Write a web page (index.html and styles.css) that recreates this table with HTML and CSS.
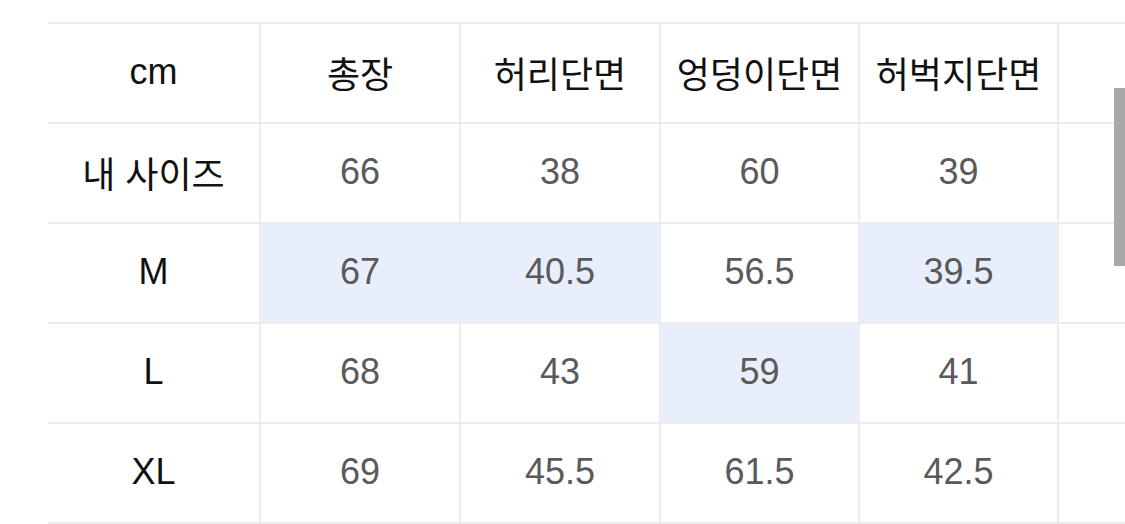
FILE: index.html
```html
<!DOCTYPE html>
<html lang="ko">
<head>
<meta charset="utf-8">
<link rel="stylesheet" href="styles.css">
</head>
<body>
<div class="viewport">
  <div class="table">
    <div class="cell head">cm</div>
    <div class="cell head">총장</div>
    <div class="cell head">허리단면</div>
    <div class="cell head">엉덩이단면</div>
    <div class="cell head">허벅지단면</div>
    <div class="cell head"></div>

    <div class="cell head">내 사이즈</div>
    <div class="cell">66</div>
    <div class="cell">38</div>
    <div class="cell">60</div>
    <div class="cell">39</div>
    <div class="cell"></div>

    <div class="cell head">M</div>
    <div class="cell hl">67</div>
    <div class="cell hl">40.5</div>
    <div class="cell">56.5</div>
    <div class="cell hl">39.5</div>
    <div class="cell"></div>

    <div class="cell head">L</div>
    <div class="cell">68</div>
    <div class="cell">43</div>
    <div class="cell hl">59</div>
    <div class="cell">41</div>
    <div class="cell"></div>

    <div class="cell head">XL</div>
    <div class="cell">69</div>
    <div class="cell">45.5</div>
    <div class="cell">61.5</div>
    <div class="cell">42.5</div>
    <div class="cell"></div>
  </div>
  <div class="scrollbar"></div>
</div>
</body>
</html>
```
FILE: styles.css
```css
html, body {
  margin: 0;
  padding: 0;
  background: #ffffff;
}
.viewport {
  position: relative;
  width: 1125px;
  height: 524px;
  overflow: hidden;
  padding: 22px 0 0 48px;
  box-sizing: border-box;
}
.table {
  display: grid;
  grid-template-columns: 211px 200px 200px 199px 199px 200px;
  grid-auto-rows: 100px;
  border-top: 2px solid #ececec;
  width: max-content;
  font-family: "Liberation Sans", "Noto Sans CJK KR", sans-serif;
}
.cell {
  display: flex;
  align-items: center;
  justify-content: center;
  border-bottom: 2px solid #ececec;
  border-left: 2px solid #ececec;
  box-sizing: border-box;
  font-size: 36px;
  color: #5a5a5a;
  padding-bottom: 2px;
}
.cell:nth-child(6n+1) {
  border-left: none;
}
.head {
  color: #111111;
}
.hl {
  background: #e8eefc;
}
.scrollbar {
  position: absolute;
  left: 1114px;
  top: 88px;
  width: 11px;
  height: 178px;
  background: #a9a9a9;
}
```
